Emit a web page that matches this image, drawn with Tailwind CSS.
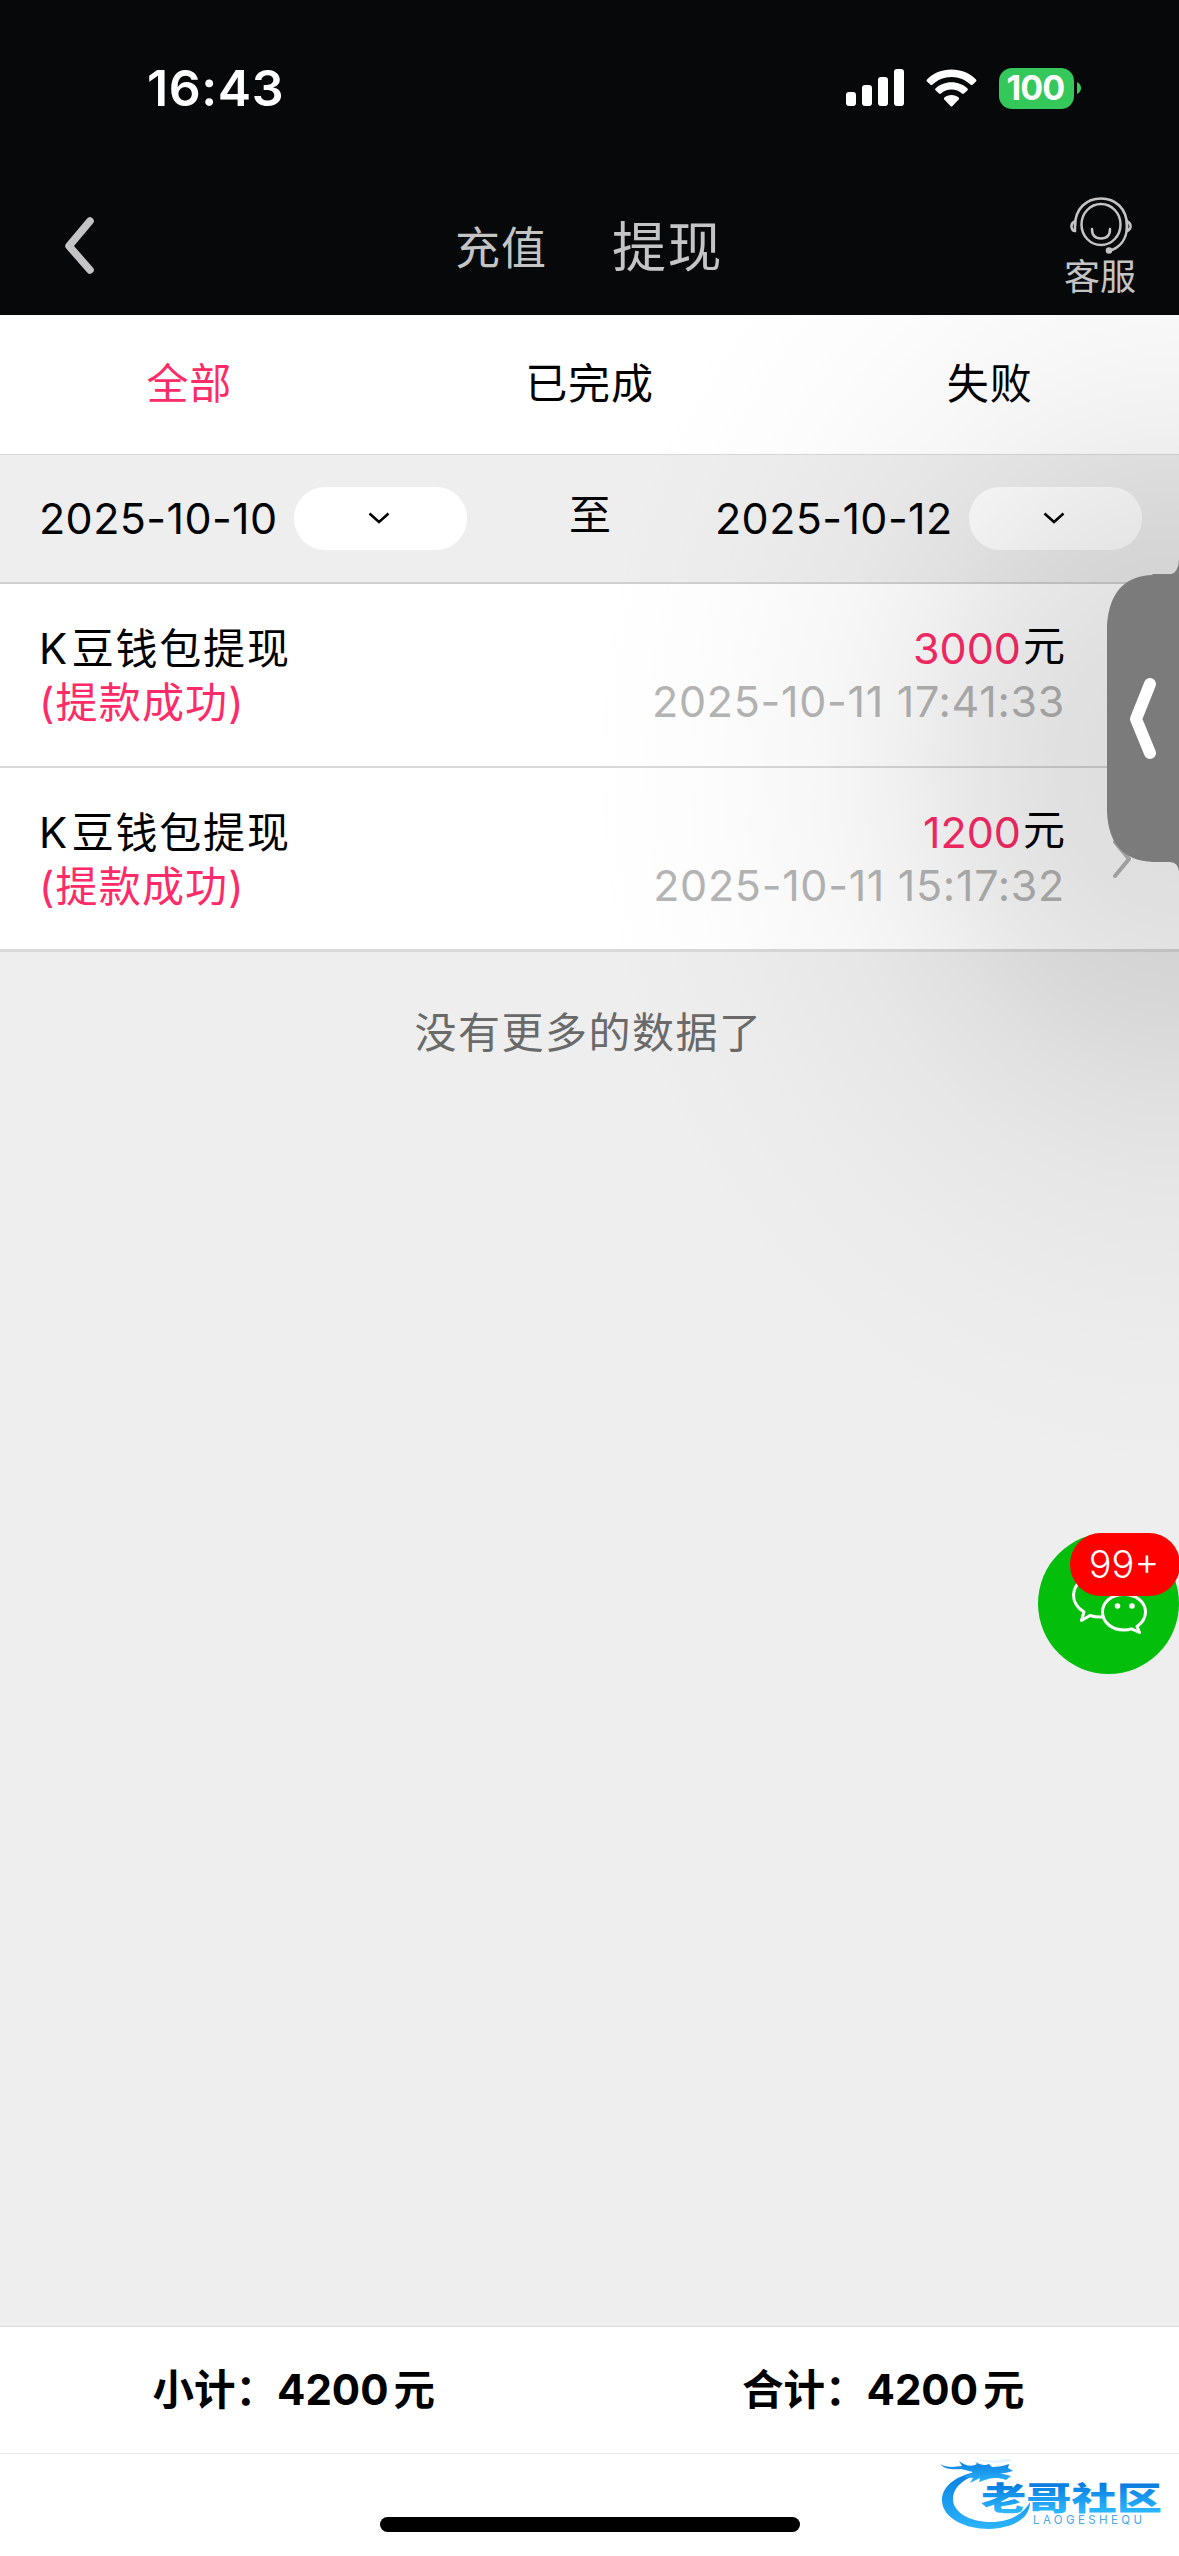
<!DOCTYPE html>
<html lang="zh-CN">
<head>
<meta charset="utf-8">
<title>提现记录</title>
<script src="https://cdn.jsdelivr.net/npm/@tailwindcss/browser@4"></script>
</head>
<body class="bg-[#eeeeee]">
<div class="relative flex h-[2556px] w-[1179px] flex-col overflow-hidden bg-[#eeeeee] font-['Inter','Noto_Sans_CJK_SC',sans-serif] text-[42px] leading-none text-black">

  <header class="flex h-[315px] shrink-0 flex-col bg-[#07080a]">
    <div class="flex h-[176px] items-center pr-[98px] pl-[147px]">
      <span class="text-[50px] font-semibold tracking-[0.6px] text-white">16:43</span>
      <div class="ml-auto flex items-center">
        <svg class="h-[38px] w-[58px]" viewBox="0 0 58 38" fill="#fff"><rect y="23" width="10" height="14" rx="3"/><rect x="16" y="16" width="10" height="21" rx="3"/><rect x="32" y="8" width="10" height="29" rx="3"/><rect x="48" width="10" height="37" rx="3"/></svg>
        <svg class="ml-[22px] h-[38px] w-[51px]" viewBox="0 0 51 38" fill="#fff"><path d="M25.500 0.500C35 .5 44 4 50 10.500Q51 11.500 50 12.500L46.500 15.800Q45.500 16.500 44.500 15.600C39.500 10.800 33 8 25.500 8S11.500 10.800 6.500 15.600Q5.500 16.500 4.500 15.800L1 12.500Q0 11.500 1 10.500C7 4 16 .5 25.500 .5Z"/><path d="M25.500 13.200C31.700 13.200 37.300 15.500 41.500 19.400Q42.400 20.300 41.500 21.200L38 24.600Q37 25.500 36 24.600C33.200 22 29.500 20.500 25.500 20.500S17.800 22 15 24.600Q14 25.500 13 24.600L9.500 21.200Q8.600 20.300 9.500 19.400C13.700 15.500 19.300 13.200 25.500 13.200Z"/><path d="M25.500 26C28.400 26 30.800 27 32.700 28.600Q33.600 29.500 32.700 30.500L26.500 37Q25.500 38 24.500 37L18.300 30.500Q17.400 29.500 18.300 28.600C20.200 27 22.600 26 25.500 26Z"/></svg>
        <div class="ml-[22px] flex h-[41px] w-[75px] items-center justify-center rounded-[13px] bg-[#34c759] pr-[2px]"><span class="text-[34px] font-bold tracking-[-0.9px] text-white">100</span></div>
        <svg class="ml-[3px] h-[12px] w-[4px]" viewBox="0 0 4 12" fill="#34c759"><path d="M0 0Q4 2 4 6T0 12Z"/></svg>
      </div>
    </div>
    <div class="flex h-[139px] items-center pr-[43px] pl-[65px] text-[#c4c4c4]">
      <svg class="h-[58px] w-[29px]" viewBox="0 0 29 58" fill="none" stroke="#c4c4c4" stroke-width="7.500" stroke-linecap="round" stroke-linejoin="round"><path d="M25 4L4 29L25 53"/></svg>
      <div class="ml-[361px] flex items-center pt-[5px]">
        <span class="text-[45px] tracking-[1px]">充值</span>
        <span class="ml-[65px] text-[54px] tracking-[1.500px]">提现</span>
      </div>
      <div class="ml-auto flex flex-col items-center">
        <svg class="ml-[2px] h-[58px] w-[62px]" viewBox="0 0 62 58" fill="none" stroke="#c4c4c4" stroke-width="2.500"><ellipse cx="31" cy="27.500" rx="19.500" ry="20.500"/><path d="M5 29C5 11 17 1.500 31 1.500S57 11 57 29C57 43 49 51 39 54"/><path d="M5 24Q1 26 1.500 30Q2 34 5 34ZM57 24Q61 26 60.500 30Q60 33 57 34Z"/><path d="M22 32Q22 41.500 31 41.500T40 32" stroke-linecap="round"/><circle cx="39" cy="53.500" r="2" fill="#c4c4c4"/></svg>
        <span class="mt-[4px] text-[36px]">客服</span>
      </div>
    </div>
  </header>

  <nav class="flex h-[140px] shrink-0 items-center justify-around border-b border-[#d8d8d8] bg-white pb-px tracking-[0.8px]">
    <span class="text-[#ff2a68]">全部</span><span>已完成</span><span>失败</span>
  </nav>

  <section class="flex h-[129px] shrink-0 items-center border-b-2 border-[#d0d0d0] pr-[37px] pl-[39px]">
    <span class="w-[255px] text-[43px] tracking-[0.4px] whitespace-nowrap">2025-10-10</span>
    <div class="flex h-[63px] w-[173px] items-center justify-center rounded-[31px] bg-white pr-[3px] pb-[2px]"><svg class="h-[12px] w-[22px]" viewBox="0 0 22 12" fill="none" stroke="#000" stroke-width="2.500"><path d="M1.500 1.500L11 10L20.500 1.500"/></svg></div>
    <span class="mx-auto pr-[2px] pb-[8px]">至</span>
    <span class="w-[254px] text-[43px] tracking-[0.4px] whitespace-nowrap">2025-10-12</span>
    <div class="flex h-[63px] w-[173px] items-center justify-center rounded-[31px] bg-white pr-[3px] pb-[2px]"><svg class="h-[12px] w-[22px]" viewBox="0 0 22 12" fill="none" stroke="#000" stroke-width="2.500"><path d="M1.500 1.500L11 10L20.500 1.500"/></svg></div>
  </section>

  <ul class="shrink-0 bg-white leading-[54px]">
    <li class="flex h-[184px] items-center justify-between border-b-2 border-[#d9d9d9] pr-[114px] pl-[39px]">
      <div class="pt-[2px] tracking-[1.500px]"><div>K<span class="ml-[3px] tracking-[1.800px]">豆钱包提现</span></div><div class="tracking-[1.200px] text-[#ff2a68]">(提款成功)</div></div>
      <div class="text-right"><div class="h-[53px]"><span class="text-[43px] text-[#ff2a68]">3000</span><span class="ml-[2px] inline-block -translate-y-[3px]">元</span></div><div class="h-[55px] text-[43px] tracking-[0.7px] text-[#b5b5b5]">2025-10-11 17:41:33</div></div>
    </li>
    <li class="flex h-[184px] items-center justify-between border-b-3 border-[#d9d9d9] pr-[48px] pl-[39px]">
      <div class="pt-[2px] tracking-[1.500px]"><div>K<span class="ml-[3px] tracking-[1.800px]">豆钱包提现</span></div><div class="tracking-[1.200px] text-[#ff2a68]">(提款成功)</div></div>
      <div class="flex items-center">
        <div class="text-right"><div class="h-[53px]"><span class="text-[43px] text-[#ff2a68]">1200</span><span class="ml-[2px] inline-block -translate-y-[3px]">元</span></div><div class="h-[55px] text-[43px] tracking-[0.7px] text-[#b5b5b5]">2025-10-11 15:17:32</div></div>
        <svg class="ml-[48px] h-[38px] w-[18px]" viewBox="0 0 18 38" fill="none" stroke="#b5b5b5" stroke-width="4" stroke-linecap="round"><path d="M2 2L16 19L2 36"/></svg>
      </div>
    </li>
  </ul>

  <p class="mt-[60px] pr-[2px] text-center tracking-[1.500px] text-[#6a6a6a]">没有更多的数据了</p>

  <footer class="mt-auto shrink-0">
    <div class="flex h-[128px] border-y border-t-[#d9d9d9] border-b-[#eaeaea] bg-white font-bold">
      <div class="flex flex-1 items-center justify-center pr-[2px]"><span class="text-[41.500px]">小计：<span class="text-[42px]">4200</span><span class="ml-[5px]">元</span></span></div>
      <div class="flex flex-1 items-center justify-center pr-[2px]"><span class="text-[41.500px]">合计：<span class="text-[42px]">4200</span><span class="ml-[5px]">元</span></span></div>
    </div>
    <div class="relative h-[102px] bg-white">
      <div class="absolute top-[63px] left-[380px] h-[15px] w-[420px] rounded-full bg-black"></div>
      <svg class="ml-auto h-[84px] w-[240px]" viewBox="0 0 240 84">
        <defs>
          <linearGradient id="sweep" x1="0" y1="0" x2="0" y2="1"><stop offset="0" stop-color="#0a7fe2"/><stop offset="1" stop-color="#2bb4fb"/></linearGradient>
          <linearGradient id="word" x1="0" y1="0" x2="0" y2="1"><stop offset=".25" stop-color="#0a7de0"/><stop offset=".85" stop-color="#2bb8ff"/></linearGradient>
        </defs>
        <g fill="url(#sweep)">
          <path d="M38 18C14 22 3 34 3 46C3 64 26 75 50 75C72 74 91 66 91 48C84 61 69 68 52 68C30 68 14 58 14 45C14 34 24 24 42 20Z"/>
          <path d="M1 10C8 14 15 13 23 12L20 7C26 12 33 13 38 10L36 8C42 11 46 12 50 10L53 13C59 13 65 12 70 10L69 14L74 17C69 18 65 20 60 19L72 22L67 26C58 23 52 24 46 26L40 28L41 24L31 29L34 24L25 23L34 18L22 15C14 16 5 15 1 10Z"/>
          <path d="M34 3Q46 8 60 6Q70 3 73 7Q64 9 56 9Q42 8 34 3Z" opacity=".12"/>
        </g>
        <text x="42" y="56" font-family="'Noto Sans CJK SC',sans-serif" font-weight="900" font-size="32" textLength="181" lengthAdjust="spacingAndGlyphs" fill="url(#word)">老哥社区</text>
        <text x="94" y="69.500" font-family="Inter,sans-serif" font-size="11.500" fill="#4ba6e8" textLength="109">LAOGESHEQU</text>
      </svg>
    </div>
  </footer>

  <!-- soft shade cast by the side drawer -->
  <div class="pointer-events-none absolute top-[315px] right-0 h-[1215px] w-[600px] bg-[radial-gradient(ellipse_600px_720px_at_600px_450px,rgba(0,0,0,0.135)_0%,rgba(0,0,0,0.12)_20%,rgba(0,0,0,0.095)_34%,rgba(0,0,0,0.055)_48%,rgba(0,0,0,0.03)_60%,rgba(0,0,0,0.01)_78%,rgba(0,0,0,0)_100%)]"></div>

  <!-- side drawer handle -->
  <svg class="absolute top-[560px] left-[1107px] h-[312px] w-[72px]" viewBox="0 0 72 312">
    <path d="M72 0V312Q71 302 63 302L46 302Q2 300 0 252V64Q4 16 46 15L45 14H64Q71 13 72 0Z" fill="#7b7b7b"/>
    <path d="M43 124L29 159L43 193" fill="none" stroke="#fff" stroke-width="12" stroke-linecap="round" stroke-linejoin="round"/>
  </svg>

  <!-- chat button -->
  <div class="absolute top-[1533px] left-[1038px] h-[141px] w-[141px] rounded-full bg-[#04be0c]">
    <svg class="h-[141px] w-[141px]" viewBox="0 0 141 141" fill="none" stroke="#fff" stroke-width="3" stroke-linejoin="round">
      <path d="M66 84Q58 84.500 52 82.500L43.500 87.500L46 79C38 74 35.500 69 35.500 62C36 50 47 42 61 42S84 50 86 60"/>
      <path d="M86 61.500C98 61.500 107.500 69 107.500 79C107.500 84.500 104 90 99 93.500L101.500 99.500L93.500 95.800Q90 97 86 97C73.500 97 64.500 89 64.500 79S73.500 61.500 86 61.500Z" fill="#04be0c"/>
      <g fill="#fff" stroke="none"><circle cx="79.500" cy="73" r="2.800"/><circle cx="94" cy="73" r="2.800"/></g>
    </svg>
  </div>
  <div class="absolute top-[1533px] left-[1070px] flex h-[63px] w-[110px] items-center justify-center rounded-[31px] bg-[#ff0000] pr-[2px] pb-[1px] text-[38px] font-[350] text-white">99+</div>
</div>
</body>
</html>
